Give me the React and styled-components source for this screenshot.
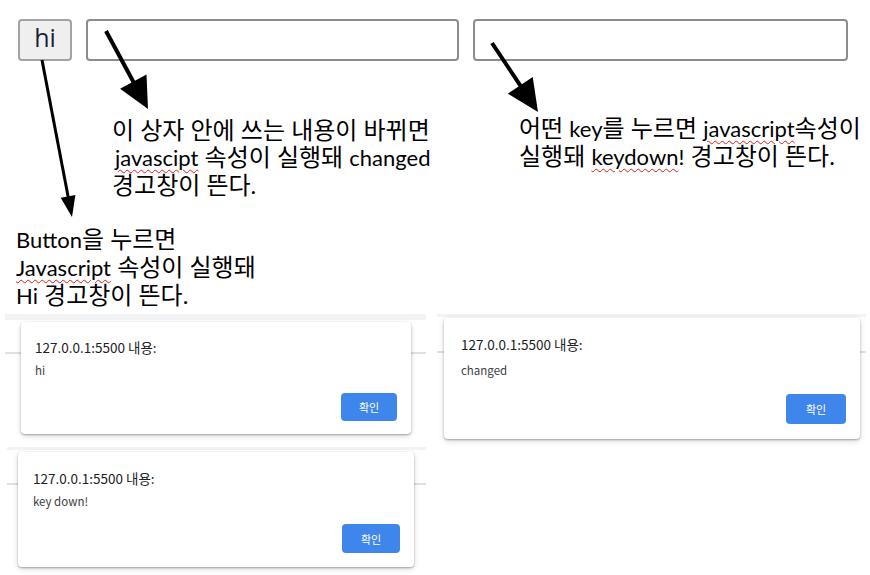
import React from 'react'
import styled, { createGlobalStyle } from 'styled-components'

const GlobalStyle = createGlobalStyle`
  html, body {
    margin: 0;
    padding: 0;
    background: #ffffff;
  }
  * {
    box-sizing: border-box;
  }
`;

const Page = styled.div`
  position: relative;
  width: 870px;
  height: 575px;
  overflow: hidden;
  background: #fff;
  font-family: "Noto Sans CJK KR", "Noto Sans", sans-serif;
`;

const Controls = styled.div`
  display: flex;
  gap: 14px;
  padding: 19px 0 0 18px;
  height: 61px;
`;

const HiButton = styled.button`
  width: 54px;
  height: 42px;
  padding: 0 0 5px;
  background: #efefef;
  border: 2px solid #a3a3a3;
  border-radius: 4px;
  font-family: "Open Sans", "Noto Sans", sans-serif;
  font-size: 25px;
  line-height: 1;
  color: #1c1c3a;
`;

const TextBox = styled.div`
  width: ${({ $w }) => $w}px;
  height: 42px;
  background: #fff;
  border: 2px solid #8c8c8c;
  border-radius: 4px;
`;

const NotesArea = styled.div`
  position: relative;
  height: 253px;
`;

const Note = styled.div`
  position: absolute;
  top: ${({ $top }) => $top}px;
  left: ${({ $left }) => $left}px;
  font-family: Lato, "Noto Sans CJK KR", sans-serif;
  font-size: 24px;
  line-height: 27px;
  color: #000;
  white-space: nowrap;
`;

const Line = styled.div`
  padding-left: ${({ $indent }) => $indent || 0}px;
`;

const Latin = styled.span`
  font-size: 22px;
  ${({ $typo }) => $typo && `
    text-decoration: underline wavy #e02020;
    text-decoration-thickness: 1px;
    text-underline-offset: 3px;
  `}
`;

const Shots = styled.div`
  display: flex;
  gap: 11px;
  padding-left: 5px;
`;

const Column = styled.div`
  display: flex;
  flex-direction: column;
`;

const Shot = styled.div`
  width: ${({ $w }) => $w}px;
  height: ${({ $h }) => $h}px;
  margin-left: ${({ $ml }) => $ml || 0}px;
  padding: ${({ $pt }) => $pt}px 0 0 ${({ $pl }) => $pl}px;
  background:
    linear-gradient(#f1f3f4, #f1f3f4) 0 0 / 100% ${({ $bar }) => $bar}px no-repeat,
    linear-gradient(#dfe1e3, #dfe1e3) 0 ${({ $line }) => $line}px / 100% 2px no-repeat,
    #fff;
`;

const Dialog = styled.div`
  width: ${({ $w }) => $w}px;
  height: ${({ $h }) => $h}px;
  padding: 0 ${({ $pr }) => $pr}px ${({ $pb }) => $pb}px ${({ $pl }) => $pl}px;
  display: flex;
  flex-direction: column;
  background: #fff;
  border-radius: 4px;
  box-shadow: 0 1px 2px rgba(0, 0, 0, 0.3), 0 2px 6px rgba(0, 0, 0, 0.15);
  font-family: "Noto Sans CJK KR", "Noto Sans", sans-serif;
`;

const Title = styled.div`
  margin-top: ${({ $mt }) => $mt}px;
  font-size: 13.5px;
  line-height: 18px;
  color: #202124;
`;

const Message = styled.div`
  margin-top: ${({ $mt }) => $mt}px;
  font-size: 11.5px;
  line-height: 16px;
  color: #3c4043;
`;

const OkButton = styled.div`
  margin-top: auto;
  align-self: flex-end;
  width: ${({ $w }) => $w}px;
  height: ${({ $h }) => $h}px;
  display: flex;
  align-items: center;
  justify-content: center;
  background: #3f86ec;
  border-radius: 4px;
  color: #fff;
  font-size: 11px;
`;

const Overlay = styled.svg`
  position: absolute;
  top: 0;
  left: 0;
  pointer-events: none;
`;

function Arrow({ x1, y1, x2, y2, len, head, stroke }) {
  const dx = x2 - x1
  const dy = y2 - y1
  const d = Math.hypot(dx, dy)
  const ux = dx / d
  const uy = dy / d
  const bx = x2 - ux * len
  const by = y2 - uy * len
  const nx = -uy * head / 2
  const ny = ux * head / 2
  const pts = `${x2},${y2} ${bx + nx},${by + ny} ${bx - nx},${by - ny}`
  return (
    <g>
      <line x1={x1} y1={y1} x2={bx + ux * 2} y2={by + uy * 2} stroke="#000" strokeWidth={stroke} />
      <polygon points={pts} fill="#000" />
    </g>
  )
}

function Alert({ w, h, pl, pr, pb, titleTop, msgTop, msg, btnW, btnH }) {
  return (
    <Dialog $w={w} $h={h} $pl={pl} $pr={pr} $pb={pb}>
      <Title $mt={titleTop}>127.0.0.1:5500 내용:</Title>
      <Message $mt={msgTop}>{msg}</Message>
      <OkButton $w={btnW} $h={btnH}>확인</OkButton>
    </Dialog>
  )
}

export default function App() {
  return (
    <Page>
      <GlobalStyle />
      <Controls>
        <HiButton>hi</HiButton>
        <TextBox $w={373} />
        <TextBox $w={375} />
      </Controls>

      <NotesArea>
        <Note $top={55} $left={112}>
          <Line>이 상자 안에 쓰는 내용이 바뀌면</Line>
          <Line $indent={3}><Latin $typo>javascipt</Latin> 속성이 실행돼 <Latin>changed</Latin></Line>
          <Line>경고창이 뜬다.</Line>
        </Note>
        <Note $top={53} $left={519}>
          <Line>어떤 <Latin>key</Latin>를 누르면 <Latin $typo>javascript</Latin>속성이</Line>
          <Line>실행돼 <Latin $typo>keydown</Latin><Latin>!</Latin> 경고창이 뜬다.</Line>
        </Note>
        <Note $top={164} $left={16}>
          <Line><Latin>Button</Latin>을 누르면</Line>
          <Line><Latin $typo>Javascript</Latin> 속성이 실행돼</Line>
          <Line><Latin>Hi</Latin> 경고창이 뜬다.</Line>
        </Note>
      </NotesArea>

      <Shots>
        <Column>
          <Shot $w={421} $h={133} $bar={6} $line={38} $pt={8} $pl={16}>
            <Alert w={390} h={112} pl={14} pr={14} pb={13} titleTop={16} msgTop={6} msg="hi" btnW={56} btnH={28} />
          </Shot>
          <Shot $w={419} $h={128} $ml={2} $bar={3} $line={36} $pt={5} $pl={11}>
            <Alert w={396} h={115} pl={15} pr={14} pb={14} titleTop={17} msgTop={6} msg="key down!" btnW={58} btnH={29} />
          </Shot>
        </Column>
        <Shot $w={429} $h={135} $bar={3} $line={37} $pt={4} $pl={7}>
          <Alert w={416} h={121} pl={17} pr={14} pb={15} titleTop={17} msgTop={9} msg="changed" btnW={60} btnH={30} />
        </Shot>
      </Shots>

      <Overlay width="870" height="575" viewBox="0 0 870 575">
        <Arrow x1={42} y1={60} x2={72} y2={217} len={21} head={15} stroke={3} />
        <Arrow x1={106} y1={31} x2={148} y2={109} len={31} head={30} stroke={4} />
        <Arrow x1={492} y1={43} x2={538} y2={112} len={32} head={30} stroke={4} />
      </Overlay>
    </Page>
  )
}
